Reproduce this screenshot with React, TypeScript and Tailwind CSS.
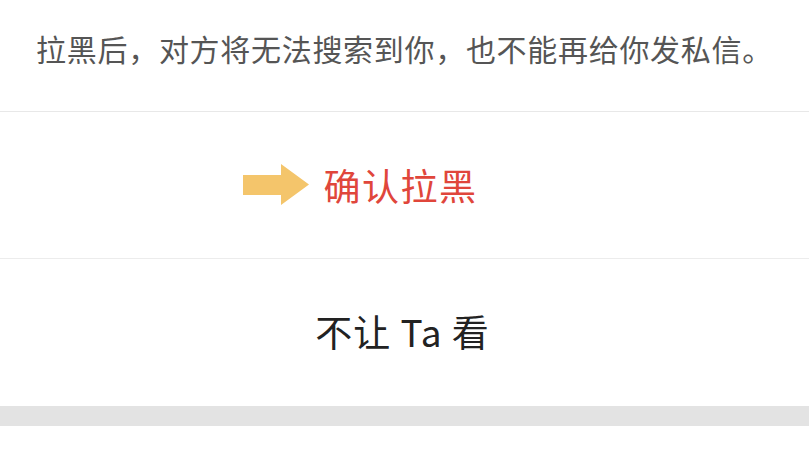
export default function App() {
  return (
    <div
      className="w-[809px] h-[455px] bg-white flex flex-col overflow-hidden"
      style={{ fontFamily: '"Noto Sans CJK SC", "Noto Sans", sans-serif' }}
    >
      <div className="h-[112px] flex items-center justify-center border-b border-[#e8e8e8] shrink-0">
        <span className="text-[30px] leading-none tracking-[0.7px] text-[#555555] pb-[16px]">
          拉黑后，对方将无法搜索到你，也不能再给你发私信。
        </span>
      </div>
      <div className="h-[147px] flex items-center justify-center border-b border-[#ececec] shrink-0">
        <span className="relative text-[37px] leading-none tracking-[1.5px] text-[#e0463b] pr-[8px]">
          <svg
            className="absolute right-full mr-[15px] top-1/2 -translate-y-1/2"
            width="66"
            height="42"
            viewBox="0 0 66 42"
          >
            <polygon
              points="0,11 38,11 38,0 66,20.5 38,41 38,31 0,31"
              fill="#f4c56b"
            />
          </svg>
          确认拉黑
        </span>
      </div>
      <div className="h-[147px] flex items-center justify-center shrink-0">
        <span className="text-[37px] leading-none tracking-[1px] text-[#222222] pb-[2px] pr-[4px]">不让 Ta 看</span>
      </div>
      <div className="h-[20px] bg-[#e3e3e3] shrink-0" />
      <div className="flex-1 bg-white" />
    </div>
  );
}
